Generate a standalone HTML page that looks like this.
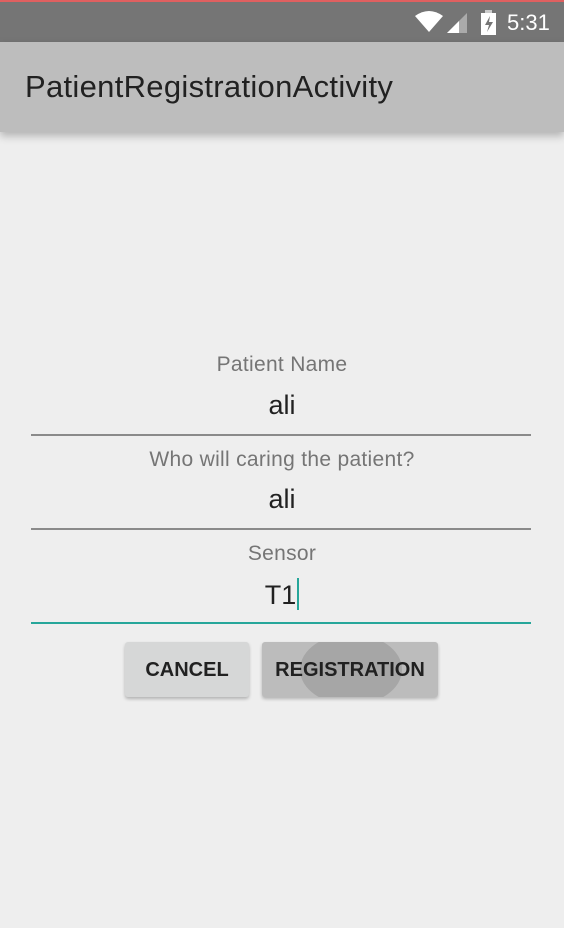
<!DOCTYPE html><html><head><style>
body{margin:0;width:564px;height:928px;background:#eeeeee;font-family:"Liberation Sans",sans-serif;position:relative;overflow:hidden}
.sb{position:absolute;top:0;left:0;width:564px;height:42px;background:#757575;border-top:2px solid #e06060;box-sizing:border-box}
.ab{position:absolute;top:42px;left:0;width:564px;height:90px;background:#bdbdbd;box-shadow:0 4px 8px rgba(0,0,0,.25)}
.ab span{position:absolute;left:25px;top:27px;font-size:31px;color:#212121;letter-spacing:0.3px}
.t{position:absolute;width:564px;text-align:center;left:0}
.lbl{font-size:21px;color:#757575;letter-spacing:0.3px}
.val{font-size:27px;color:#212121}
.ln{position:absolute;left:31px;width:500px;height:2px;background:#8a8a8a}
.btn{position:absolute;top:642px;height:55px;border-radius:3px;font-size:20px;font-weight:bold;color:#212121;text-align:center;line-height:56px;box-shadow:0 2px 3px rgba(0,0,0,.25)}
</style></head><body>
<div class="sb">
<svg style="position:absolute;left:414px;top:8px" width="30" height="24"><path d="M1 6 Q15 -4 29 6 L15 22Z" fill="#fff"/></svg>
<svg style="position:absolute;left:446px;top:10px" width="22" height="22"><path d="M1 21 L21 1 V21Z" fill="#aaa"/><path d="M1 21 L13 9 V21Z" fill="#fff"/></svg>
<svg style="position:absolute;left:480px;top:8px" width="18" height="26"><rect x="5" y="0" width="7" height="3" fill="#ccc"/><rect x="1" y="3" width="15" height="22" fill="#fff"/><path d="M10 6 L5 15 H9 L7 22 L13 12 H9Z" fill="#757575"/></svg>
<span style="position:absolute;left:507px;top:8px;font-size:22px;color:#fff">5:31</span>
</div>
<div class="ab"><span>PatientRegistrationActivity</span></div>
<div class="t lbl" style="top:353px">Patient Name</div>
<div class="t val" style="top:390px">ali</div>
<div class="ln" style="top:434px"></div>
<div class="t lbl" style="top:448px">Who will caring the patient?</div>
<div class="t val" style="top:484px">ali</div>
<div class="ln" style="top:528px"></div>
<div class="t lbl" style="top:542px">Sensor</div>
<div class="t val" style="top:578px">T1<span style="display:inline-block;width:2px;height:32px;background:#26a69a;vertical-align:-6px;margin-left:1px"></span></div>
<div class="ln" style="top:622px;background:#26a69a"></div>
<div class="btn" style="left:125px;width:124px;background:#d6d7d7">CANCEL</div>
<div class="btn" style="left:262px;width:176px;background:#bcbcbc;overflow:hidden"><div style="position:absolute;left:38px;top:-8px;width:102px;height:71px;border-radius:50%;background:#a6a6a6"></div><span style="position:relative">REGISTRATION</span></div>
</body></html>
